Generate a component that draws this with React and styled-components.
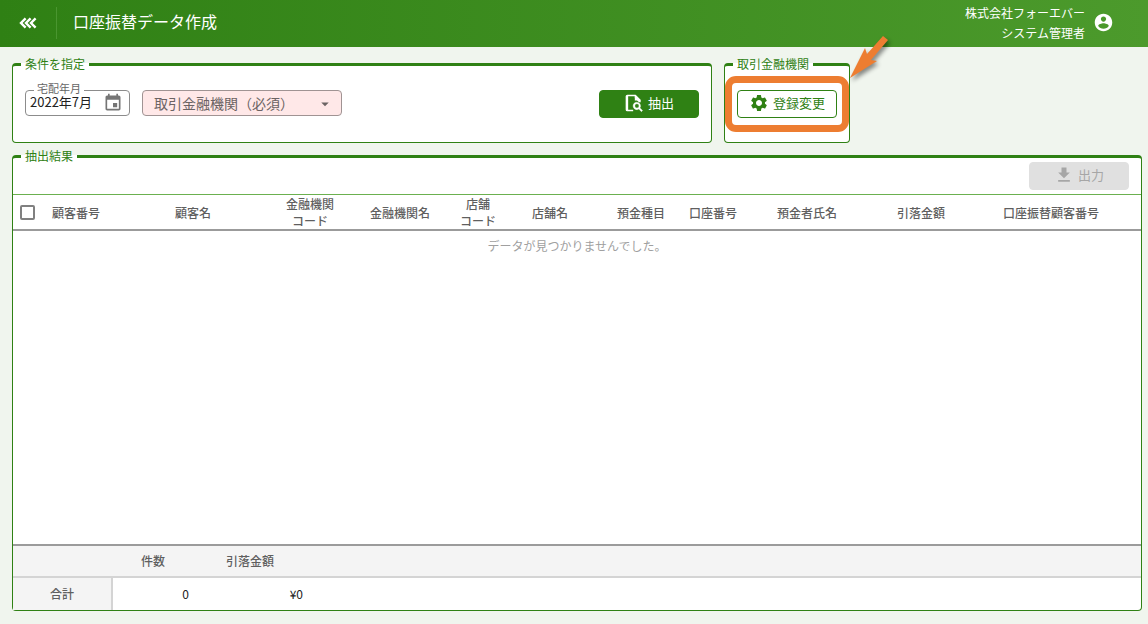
import styled, { createGlobalStyle } from "styled-components"
import { MdArrowDropDown, MdGetApp, MdSettings } from "react-icons/md"

const GlobalStyle = createGlobalStyle`
*{
  box-sizing:border-box;
}
body{
  margin:0;
  background:#f0f5ee;
  color:#212121;
  font-family:"Noto Sans CJK JP", sans-serif;
  font-size:12px;
  line-height:18px;
}
button, input, select{
  font-family:inherit;
  margin:0;
}
`

const Page = styled.div`
display:flex;
flex-direction:column;
min-height:100vh;
`
const Header = styled.header`
display:flex;
align-items:center;
height:47px;
padding:0 34px 2px 16px;
background:linear-gradient(90deg, #2f8014 0%, #4c9a2c 100%);
color:#FFFFFF;
`
const IconButton = styled.button`
display:flex;
align-items:center;
justify-content:center;
flex:none;
padding:0;
border:0;
background:none;
color:${props => props.$color || "inherit"};
cursor:pointer;
`
const Title = styled.h1`
flex:1;
margin:0 0 0 16px;
padding:2px 16px 6px;
border-left:1px solid #4a9530;
font-size:16px;
font-weight:400;
line-height:24px;
`
const User = styled.div`
margin-right:8px;
text-align:right;
line-height:20px;
`
const Main = styled.main`
display:flex;
flex-direction:column;
flex:1;
gap:12px;
padding:16px 6px 13px 12px;
`
const Conditions = styled.div`
display:flex;
gap:12px;
`
const Panel = styled.fieldset`
min-width:0;
margin:0;
padding:24px 12px;
border:1px solid #2f8114;
border-top-width:3px;
border-radius:4px;
background:#FFFFFF;
flex:${props => props.$flex || "none"};
`
const Legend = styled.legend`
margin-left:-4px;
padding:0 4px 2px;
line-height:1px;
color:#2f8114;
`
const ResultPanel = styled(Panel)`
padding:0;
${Legend}{
  margin-left:8px;
}
`
const Row = styled.div`
display:flex;
gap:12px;
height:28px;
`
const Spacer = styled.div`
flex:1;
`
const MonthField = styled.div`
position:relative;
display:flex;
align-items:center;
width:105px;
height:26px;
padding:0 6px 0 4px;
border:1px solid #8c8c8c;
border-radius:4px;
`
const FieldLabel = styled.label`
position:absolute;
top:-10px;
left:8px;
padding:0 3px;
background:#FFFFFF;
color:#666666;
font-size:11px;
line-height:14px;
`
const MonthInput = styled.input`
flex:1;
min-width:0;
padding:0 0 2px;
border:0;
outline:none;
background:none;
color:#212121;
font-size:13px;
line-height:20px;
`
const SelectBox = styled.div`
position:relative;
width:200px;
height:26px;
color:#6b6363;
svg{
  position:absolute;
  top:5px;
  right:8px;
  pointer-events:none;
}
`
const Select = styled.select`
appearance:none;
width:100%;
height:100%;
padding:0 28px 0 11px;
border:1px solid #a09393;
border-radius:4px;
background:#ffe8e8;
color:inherit;
font-size:14px;
`
const Button = styled.button`
display:flex;
align-items:center;
justify-content:center;
gap:4px;
width:100px;
height:28px;
padding:0 0 2px;
border:1px solid #2f8114;
border-radius:4px;
background:${props => props.$outlined ? "#FFFFFF" : "#2f8114"};
color:${props => props.$outlined ? "#2f8114" : "#FFFFFF"};
font-size:13px;
line-height:20px;
cursor:pointer;
&:disabled{
  border-color:#e0e0e0;
  background:#e0e0e0;
  color:#a6a6a6;
  cursor:default;
}
`
const Marked = styled.div`
position:relative;
`
const MarkFrame = styled.div`
position:absolute;
inset:-14px -12px;
border:7px solid #ed7d31;
border-radius:11px;
pointer-events:none;
`
const MarkArrow = styled.svg`
position:absolute;
left:111px;
top:-56px;
pointer-events:none;
filter:drop-shadow(2px 3px 2px rgba(0,0,0,0.45));
`
const Toolbar = styled.div`
display:flex;
justify-content:flex-end;
padding:4px 12px;
`
// fills the window between the toolbar and the totals
const TableArea = styled.div`
min-height:calc(100vh - 274px);
`
const Table = styled.table`
width:100%;
border-collapse:separate;
border-spacing:0;
table-layout:fixed;
`
const Th = styled.th`
height:37px;
padding:${props => props.$last ? "0 10px 0 0" : "0"};
border-top:1px solid #6bb04f;
border-bottom:2px solid #9b9b9b;
color:#5f5f5f;
font-weight:500;
line-height:17px;
white-space:pre-line;
`
const Empty = styled.td`
height:30px;
padding:0;
color:#a0a0a0;
text-align:center;
`
const Checkbox = styled.input`
appearance:none;
display:block;
width:15px;
height:15px;
margin:0 auto;
border:2px solid #808080;
border-radius:2px;
background:#FFFFFF;
`
const Summary = styled(Table)`
border-top:2px solid #9b9b9b;
`
const SumTh = styled.th`
height:32px;
padding:0;
border-bottom:2px solid #d4d4d4;
background:#f4f4f4;
color:#5f5f5f;
font-weight:500;
`
const SumLabel = styled.th`
height:32px;
padding:0;
border-right:2px solid #d4d4d4;
background:#f4f4f4;
color:#5f5f5f;
font-weight:500;
`
const SumTd = styled.td`
padding:0 4px;
text-align:right;
`

const columns = [
  { label: "顧客番号", width: 70 },
  { label: "顧客名", width: 164 },
  { label: "金融機関\nコード", width: 70 },
  { label: "金融機関名", width: 110 },
  { label: "店舗\nコード", width: 46 },
  { label: "店舗名", width: 98 },
  { label: "預金種目", width: 84 },
  { label: "口座番号", width: 60 },
  { label: "預金者氏名", width: 128 },
  { label: "引落金額", width: 100 },
  { label: "口座振替顧客番号", width: 170 },
]

function ChevronsIcon() {
  return (
    <svg width="24" height="24" viewBox="0 0 24 24" fill="none" stroke="currentColor" strokeWidth="2.4">
      <path d="M9.6 7.4L5 12l4.6 4.6M14.6 7.4L10 12l4.6 4.6M19.6 7.4L15 12l4.6 4.6" />
    </svg>
  )
}

function AccountIcon() {
  return (
    <svg width="21" height="21" viewBox="0 0 24 24" fill="currentColor">
      <path d="M12 2C6.48 2 2 6.48 2 12s4.48 10 10 10 10-4.48 10-10S17.52 2 12 2zm0 3c1.66 0 3 1.34 3 3s-1.34 3-3 3-3-1.34-3-3 1.34-3 3-3zm0 14.2c-2.5 0-4.71-1.28-6-3.22.03-1.99 4-3.08 6-3.08 1.99 0 5.97 1.09 6 3.08-1.29 1.94-3.5 3.22-6 3.22z" />
    </svg>
  )
}

function CalendarIcon() {
  return (
    <svg width="20" height="20" viewBox="0 0 24 24" fill="currentColor">
      <path d="M17 12h-5v5h5v-5zM16 1v2H8V1H6v2H5c-1.11 0-1.99.9-1.99 2L3 19c0 1.1.89 2 2 2h14c1.1 0 2-.9 2-2V5c0-1.1-.9-2-2-2h-1V1h-2zm3 18H5V8h14v11z" />
    </svg>
  )
}

function FileSearchIcon() {
  return (
    <svg width="20" height="20" viewBox="0 0 24 24" fill="currentColor">
      <path d="M4 2h10l6 6v3h-2l-5-5V4H5v16h6v2H4a2 2 0 0 1-2-2V4a2 2 0 0 1 2-2z" />
      <path d="M13 2v7h7z" />
      <path d="M15.5 11a4.5 4.5 0 1 0 2.3 8.3l3.1 3.1 1.4-1.4-3.1-3.1A4.5 4.5 0 0 0 15.5 11zm0 2a2.5 2.5 0 1 1 0 5 2.5 2.5 0 0 1 0-5z" stroke="currentColor" strokeWidth="0.4" />
    </svg>
  )
}

function App() {
  return (
    <Page>
      <GlobalStyle />
      <Header>
        <IconButton aria-label="メニュー"><ChevronsIcon /></IconButton>
        <Title>口座振替データ作成</Title>
        <User>
          <div>株式会社フォーエバー</div>
          <div>システム管理者</div>
        </User>
        <IconButton aria-label="アカウント"><AccountIcon /></IconButton>
      </Header>

      <Main>
        <Conditions>
          <Panel $flex="0 1 700px">
            <Legend>条件を指定</Legend>
            <Row>
              <MonthField>
                <FieldLabel htmlFor="month">宅配年月</FieldLabel>
                <MonthInput id="month" type="text" defaultValue="2022年7月" />
                <IconButton aria-label="カレンダー" $color="#757575"><CalendarIcon /></IconButton>
              </MonthField>
              <SelectBox>
                <Select aria-label="取引金融機関">
                  <option>取引金融機関（必須）</option>
                </Select>
                <MdArrowDropDown size={18} />
              </SelectBox>
              <Spacer />
              <Button><FileSearchIcon />抽出</Button>
            </Row>
          </Panel>
          <Panel>
            <Legend>取引金融機関</Legend>
            <Marked>
              <Button $outlined><MdSettings size={20} />登録変更</Button>
              <MarkFrame />
              <MarkArrow width="44" height="48" viewBox="0 0 44 48">
                <path d="M2 44L17 14l2 6L35 2l5 4L23 26l6 1z" fill="#ed7d31" />
              </MarkArrow>
            </Marked>
          </Panel>
        </Conditions>

        <ResultPanel>
          <Legend>抽出結果</Legend>
          <Toolbar>
            <Button disabled><MdGetApp size={20} />出力</Button>
          </Toolbar>
          <TableArea>
            <Table>
              <colgroup>
                <col width={28} />
                {columns.map(c => <col key={c.label} width={c.width} />)}
              </colgroup>
              <thead>
                <tr>
                  <Th><Checkbox type="checkbox" aria-label="すべて選択" /></Th>
                  {columns.map((c, i) => (
                    <Th key={c.label} $last={i === columns.length - 1}>{c.label}</Th>
                  ))}
                </tr>
              </thead>
              <tbody>
                <tr><Empty colSpan={12}>データが見つかりませんでした。</Empty></tr>
              </tbody>
            </Table>
          </TableArea>
          <Summary>
            <colgroup>
              <col width={100} />
              <col width={80} />
              <col width={114} />
              <col />
            </colgroup>
            <thead>
              <tr>
                <SumTh />
                <SumTh>件数</SumTh>
                <SumTh>引落金額</SumTh>
                <SumTh />
              </tr>
            </thead>
            <tbody>
              <tr>
                <SumLabel>合計</SumLabel>
                <SumTd>0</SumTd>
                <SumTd>¥0</SumTd>
                <td />
              </tr>
            </tbody>
          </Summary>
        </ResultPanel>
      </Main>
    </Page>
  )
}

export default App
